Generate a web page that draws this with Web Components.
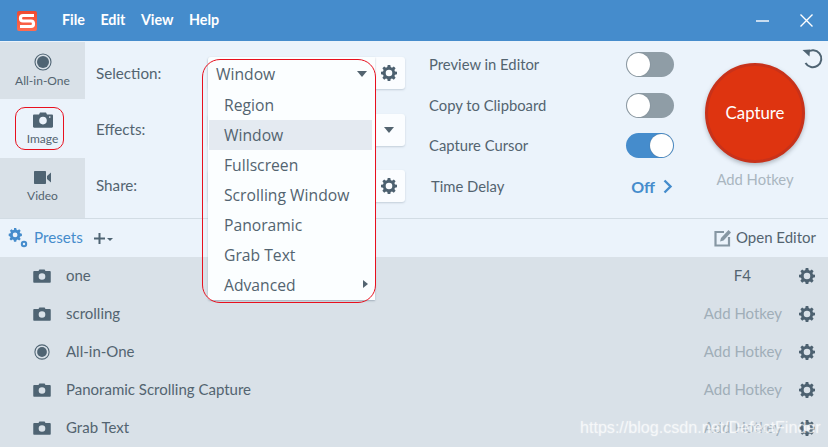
<!DOCTYPE html>
<html>
<head>
<meta charset="utf-8">
<style>
  html, body { margin: 0; padding: 0; }
  body { width: 828px; height: 447px; overflow: hidden; font-family: "Lato", "Liberation Sans", sans-serif; color: #536470; }
</style>
</head>
<body>
<snag-app></snag-app>

<script>
const GEAR = `<svg viewBox="0 0 16 16" width="16" height="16" style="display:block"><path fill="#4d6170" fill-rule="evenodd" d="M6.700 0h2.600l.4 2.100 1.300.6 1.800-1.200 1.800 1.800-1.200 1.800.6 1.300 2 .4v2.500l-2 .5-.6 1.300 1.200 1.700-1.800 1.900-1.800-1.200-1.300.5-.4 2H6.700l-.4-2-1.300-.5-1.800 1.200-1.800-1.900 1.200-1.700-.6-1.300-2-.5V6.800l2-.4.6-1.300-1.200-1.800 1.800-1.800 1.800 1.200 1.300-.6zM8 4.700a3.300 3.300 0 1 0 0 6.600 3.300 3.300 0 0 0 0-6.600z"/></svg>`;
const CAMERA = `<svg viewBox="0 0 20 16" width="20" height="16"><path fill="#4f6473" fill-rule="evenodd" d="M1.200 2.400H6L7 .5h6l1 1.900h4.800c.7 0 1.200.5 1.200 1.200v11c0 .7-.5 1.200-1.200 1.200H1.200C.5 15.800 0 15.300 0 14.600v-11c0-.7.5-1.200 1.200-1.200zM10 4.800a3.800 3.800 0 1 0 0 7.600 3.800 3.800 0 0 0 0-7.600zM16.800 4.300a.8.8 0 1 0 0 1.600.8.8 0 0 0 0-1.600z"/></svg>`;
const RADIO = `<svg viewBox="0 0 18 18" width="18" height="18"><circle cx="9" cy="9" r="8" fill="none" stroke="#4f6473" stroke-width="1.100"/><circle cx="9" cy="9" r="6" fill="#4f6473"/></svg>`;

class SnagTitlebar extends HTMLElement {
  constructor() {
    super();
    this.attachShadow({mode: "open"}).innerHTML = `
      <style>
        :host { display: flex; align-items: center; height: 41px; background: #458ccc; color: #fff; font-size: 14.300px; font-weight: 700; }
        .logo { margin-left: 17px; width: 20px; height: 20px; }
        nav { display: flex; gap: 15.500px; margin-left: 25px; padding-bottom: 2px; }
        .ctl { margin-left: auto; display: flex; gap: 31px; margin-right: 15px; align-items: center; }
      </style>
      <svg class="logo" viewBox="0 0 20 20">
        <defs><linearGradient id="lg" x1="0" y1="0" x2="0" y2="1"><stop offset="0" stop-color="#ee4a30"/><stop offset="1" stop-color="#ff6b50"/></linearGradient></defs>
        <rect width="20" height="20" rx="2" fill="url(#lg)"/>
        <path d="M17 4.500H6C4 4.500 3.500 6 3.500 7.200S4 10 6 10h8c2 0 2.500 1.300 2.500 2.700S16 15.500 14 15.500H3" fill="none" stroke="#fff" stroke-width="3.200"/>
      </svg>
      <nav><span>File</span><span>Edit</span><span>View</span><span>Help</span></nav>
      <div class="ctl">
        <svg width="13" height="13" viewBox="0 0 13 13"><path d="M0 7h13" stroke="#fff" stroke-width="1.400"/></svg>
        <svg width="13" height="13" viewBox="0 0 13 13"><path d="M.5.500l12 12M12.500.500l-12 12" stroke="#fff" stroke-width="1.400"/></svg>
      </div>`;
  }
}

class ModeTab extends HTMLElement {
  constructor() {
    super();
    this.attachShadow({mode: "open"}).innerHTML = `
      <style>
        :host { display: flex; flex-direction: column; align-items: center; justify-content: center; gap: var(--gap, 1px); flex: 1; background: #d9e1e8; font-size: 12px; color: #536470; padding: var(--pt, 0px) 0 var(--pb, 0px); }
        :host([active]) { background: transparent; }
        .ic { height: 18px; display: flex; align-items: center; }
      </style>
      <div class="ic"><slot name="icon"></slot></div>
      <slot></slot>`;
  }
}

class ModeSidebar extends HTMLElement {
  constructor() {
    super();
    this.attachShadow({mode: "open"}).innerHTML = `
      <style>:host { display: flex; flex-direction: column; width: 85px; padding-top: 1px; flex: none; }</style>
      <slot></slot>`;
  }
}

class SelectRow extends HTMLElement {
  constructor() {
    super();
    this.attachShadow({mode: "open"}).innerHTML = `
      <style>
        :host { display: flex; align-items: center; height: 32px; font-size: 15.200px; color: #536470; }
        .label { width: 123px; padding: 0 0 var(--lift, 0px) 11px; box-sizing: border-box; }
        .box { width: 197px; height: 32px; background: #fbfdff; border-radius: 3px; box-shadow: 0 1px 2px rgba(80,100,120,.25); display: flex; align-items: center; justify-content: flex-end; padding-right: 8px; box-sizing: border-box; }
      </style>
      <span class="label"><slot></slot></span>
      <div class="box"><slot name="end"></slot></div>`;
  }
}

class SnagDropdown extends HTMLElement {
  constructor() {
    super();
    this.attachShadow({mode: "open"}).innerHTML = `
      <style>
        :host { position: absolute; left: 208px; top: 57px; width: 167px; background: #fbfeff; box-shadow: 0 1px 2px rgba(80,100,120,.4); font-family: "Open Sans", "Noto Sans", sans-serif; font-size: 15.700px; color: #536470; border-radius: 3px 0 0 3px; }
        .head { display: flex; align-items: center; justify-content: space-between; height: 33px; padding: 0 8px 0 8px; }
        .arrow { width: 0; height: 0; border: 5px solid transparent; border-top: 6px solid #536470; border-bottom: 0; }
        .list { padding: 0 1px; }
      </style>
      <div class="head"><span>Window</span><span class="arrow"></span></div>
      <div class="list"><slot></slot></div>`;
  }
}

class DropItem extends HTMLElement {
  constructor() {
    super();
    this.attachShadow({mode: "open"}).innerHTML = `
      <style>
        :host { display: flex; align-items: center; height: 30px; padding-left: 15px; position: relative; }
        :host([selected]) { background: #e4eaf1; margin-right: 2px; }
        :host([more])::after { content: ""; position: absolute; right: 6px; top: 10px; border: 4.500px solid transparent; border-left: 5px solid #536470; border-right: 0; }
      </style>
      <slot></slot>`;
  }
}

class SettingRow extends HTMLElement {
  constructor() {
    super();
    this.attachShadow({mode: "open"}).innerHTML = `
      <style>
        :host { display: flex; align-items: center; justify-content: space-between; height: 25px; font-size: 14.800px; color: #536470; }
        span { padding-bottom: 1px; }
      </style>
      <span><slot></slot></span><slot name="end"></slot>`;
  }
}

class SnagToggle extends HTMLElement {
  constructor() {
    super();
    this.attachShadow({mode: "open"}).innerHTML = `
      <style>
        :host { display: flex; width: 48px; height: 25px; border-radius: 13px; background: #8f9da6; box-sizing: border-box; padding: 1px; }
        :host([on]) { background: #458ccc; justify-content: flex-end; }
        i { display: block; width: 23px; height: 23px; border-radius: 50%; background: #fff; box-shadow: 0 0 1px #5a6a75; }
      </style>
      <i></i>`;
  }
}

class CaptureButton extends HTMLElement {
  constructor() {
    super();
    this.attachShadow({mode: "open"}).innerHTML = `
      <style>
        :host { display: flex; flex-direction: column; align-items: center; width: 100px; }
        button { width: 100px; height: 100px; border-radius: 50%; border: 3px solid #c8321a; background: #de3410; color: #fff; font: 400 16.800px "Lato", sans-serif; box-shadow: 0 2px 4px rgba(60,70,80,.35); padding: 0 0 1px; }
        span { margin-top: 7px; font-size: 14.800px; color: #a9b6c0; white-space: nowrap; }
      </style>
      <button>Capture</button><span>Add Hotkey</span>`;
  }
}

class PresetRow extends HTMLElement {
  constructor() {
    super();
    this.attachShadow({mode: "open"}).innerHTML = `
      <style>
        :host { display: flex; align-items: center; height: 38px; font-size: 15px; color: #536470; }
        .ic { width: 66px; padding-left: 33px; box-sizing: border-box; display: flex; align-items: center; flex: none; }
        .name { flex: 1; padding-bottom: 2px; }
        .key { color: #a0aeb8; padding-bottom: 2px; }
        :host([assigned]) .key { color: #536470; margin-right: 31px; }
        .gear { margin: 0 13px 0 17px; display: flex; }
      </style>
      <div class="ic"><slot name="icon"></slot></div>
      <div class="name"><slot></slot></div>
      <span class="key"><slot name="key">Add Hotkey</slot></span>
      <div class="gear">${GEAR}</div>`;
  }
}

class SnagApp extends HTMLElement {
  constructor() {
    super();
    const cam = `<svg slot="icon" viewBox="0 0 20 16" width="18" height="14"><path fill="#4f6473" fill-rule="evenodd" d="M1.200 2.400H6L7 .5h6l1 1.900h4.800c.7 0 1.200.5 1.200 1.200v11c0 .7-.5 1.200-1.200 1.200H1.200C.5 15.800 0 15.300 0 14.600v-11c0-.7.5-1.200 1.200-1.200zM10 4.800a3.800 3.800 0 1 0 0 7.600 3.800 3.800 0 0 0 0-7.600z"/></svg>`;
    const rad = `<svg slot="icon" viewBox="0 0 18 18" width="16" height="16" style="margin-left:1px"><circle cx="9" cy="9" r="8" fill="none" stroke="#4f6473" stroke-width="1.200"/><circle cx="9" cy="9" r="5.500" fill="#4f6473"/></svg>`;
    this.attachShadow({mode: "open"}).innerHTML = `
      <style>
        :host { display: block; position: relative; width: 828px; height: 447px; overflow: hidden; background: #d9e1e8; }
        .top { display: flex; height: 177px; background: #ebf3fb; border-bottom: 1px solid #d2dce4; }
        .form { width: 320px; flex: none; display: flex; flex-direction: column; gap: 24px; padding-top: 16px; }
        .form :nth-child(2) { margin-top: 1px; }
        .settings { width: 245px; flex: none; margin-left: 24px; display: flex; flex-direction: column; gap: 15.500px; padding-top: 11px; box-sizing: border-box; }
        .cap { margin-left: 31px; padding-top: 22px; position: relative; }
        .reset { position: absolute; left: 96px; top: 7px; }
        .delay-off { color: #458ccc; font-weight: 700; font-size: 16px; display: flex; align-items: center; gap: 8px; margin-right: 1px; margin-left: -2px; }
        .plain { padding-left: 2px; }
        .bar { display: flex; align-items: center; height: 38px; background: #ebf3fb; font-size: 14px; padding: 0 12px 0 8px; }
        .presets { color: #458ccc; margin-left: 6px; font-size: 15.200px; padding-bottom: 2px; }
        .plus { margin-left: 11px; display: flex; align-items: center; gap: 2px; }
        .edit { margin-left: auto; display: flex; align-items: center; gap: 4px; font-size: 15px; color: #536470; }
        .edit b { font-weight: 400; padding-bottom: 2px; }
        .mark { position: absolute; font-family: "Liberation Sans", sans-serif; color: rgba(255,255,255,.68); font-size: 16.100px; left: 580px; top: 418px; text-shadow: 0 0 2px rgba(255,255,255,.45); white-space: nowrap; }
        .ring { position: absolute; border: 1px solid #e8101e; box-sizing: border-box; pointer-events: none; }
        .ring.a { left: 15px; top: 107px; width: 49px; height: 43px; border-radius: 10px; }
        .ring.b { left: 202px; top: 59px; width: 174px; height: 244px; border-radius: 18px; }
      </style>
      <snag-titlebar></snag-titlebar>
      <div class="top">
        <mode-sidebar>
          <mode-tab style="--pt:1px"><span slot="icon">${RADIO}</span>All-in-One</mode-tab>
          <mode-tab active style="--gap:0px;--pt:2px"><span slot="icon">${CAMERA}</span>Image</mode-tab>
          <mode-tab style="--gap:2px;--pb:4px"><svg slot="icon" viewBox="0 0 18 13" width="18" height="13"><path fill="#4f6473" d="M1 0h10c.6 0 1 .4 1 1v11c0 .6-.4 1-1 1H1c-.6 0-1-.4-1-1V1c0-.6.4-1 1-1zM13 5l4-3.500v10L13 8z"/></svg>Video</mode-tab>
        </mode-sidebar>
        <div class="form">
          <select-row>Selection:<span slot="end">${GEAR}</span></select-row>
          <select-row style="--lift:2px">Effects:<span slot="end" style="width:0;height:0;border:5px solid transparent;border-top:6px solid #536470;border-bottom:0;margin-right:3px"></span></select-row>
          <select-row style="--lift:2px">Share:<span slot="end">${GEAR}</span></select-row>
        </div>
        <div class="settings">
          <setting-row>Preview in Editor<snag-toggle slot="end"></snag-toggle></setting-row>
          <setting-row>Copy to Clipboard<snag-toggle slot="end"></snag-toggle></setting-row>
          <setting-row>Capture Cursor<snag-toggle slot="end" on></snag-toggle></setting-row>
          <setting-row><span class="plain">Time Delay</span><span class="delay-off" slot="end">Off <svg width="10" height="15" viewBox="0 0 10 15"><path d="M1.500 1.500L7.500 7.500l-6 6" fill="none" stroke="#458ccc" stroke-width="2.400"/></svg></span></setting-row>
        </div>
        <div class="cap">
          <capture-button></capture-button>
          <svg class="reset" width="22" height="22" viewBox="0 0 22 22"><path d="M6 4.500A8.500 8.500 0 1 1 4.500 15" fill="none" stroke="#4f6473" stroke-width="2"/><path d="M1.500 2l7.500-.5-.5 7z" fill="#4f6473"/></svg>
        </div>
      </div>
      <div class="bar">
        <svg width="20" height="20" viewBox="0 0 20 20"><g fill="#458ccc"><path fill-rule="evenodd" d="M6 0h2.200l.4 1.700 1.100.5 1.500-1 1.500 1.500-1 1.500.5 1.100 1.700.4V8l-1.700.4-.5 1.100 1 1.500-1.500 1.500-1.500-1-1.100.5-.4 1.700H6l-.4-1.700-1.100-.5-1.500 1-1.500-1.500 1-1.500-.5-1.100L.7 8V5.700l1.700-.4.5-1.100-1-1.500L3.400 1.200l1.500 1 1.100-.5zM7.100 4.500a2.400 2.400 0 1 0 0 4.800 2.400 2.400 0 0 0 0-4.800z"/><circle cx="16" cy="16" r="3.200"/></g><circle cx="16" cy="16" r="1.200" fill="#ebf3fb"/></svg>
        <span class="presets">Presets</span>
        <span class="plus"><svg width="11" height="11" viewBox="0 0 11 11"><path d="M5.500 0v11M0 5.500h11" stroke="#4f6473" stroke-width="2"/></svg><svg width="6" height="3" viewBox="0 0 6 3" style="margin-top:3px"><path d="M0 0h6L3 3z" fill="#4f6473"/></svg></span>
        <span class="edit"><svg width="18" height="18" viewBox="0 0 18 18"><path d="M10 3H1.500v13.500H15V8" fill="none" stroke="#8697a3" stroke-width="2.200"/><path d="M6 12.500l1-3.500 7.500-8 2.500 2.500-7.500 8z" fill="#8697a3"/></svg><b>Open Editor</b></span>
      </div>
      <preset-row assigned>${cam}one<span slot="key">F4</span></preset-row>
      <preset-row>${cam}scrolling</preset-row>
      <preset-row>${rad}All-in-One</preset-row>
      <preset-row>${cam}Panoramic Scrolling Capture</preset-row>
      <preset-row>${cam}Grab Text</preset-row>
      <snag-dropdown>
        <drop-item>Region</drop-item>
        <drop-item selected>Window</drop-item>
        <drop-item>Fullscreen</drop-item>
        <drop-item>Scrolling Window</drop-item>
        <drop-item>Panoramic</drop-item>
        <drop-item>Grab Text</drop-item>
        <drop-item more>Advanced</drop-item>
      </snag-dropdown>
      <div class="ring a"></div>
      <div class="ring b"></div>
      <div class="mark">https://blog.csdn.net/DefectFinder</div>`;
  }
}

customElements.define("snag-titlebar", SnagTitlebar);
customElements.define("mode-tab", ModeTab);
customElements.define("mode-sidebar", ModeSidebar);
customElements.define("select-row", SelectRow);
customElements.define("snag-dropdown", SnagDropdown);
customElements.define("drop-item", DropItem);
customElements.define("setting-row", SettingRow);
customElements.define("snag-toggle", SnagToggle);
customElements.define("capture-button", CaptureButton);
customElements.define("preset-row", PresetRow);
customElements.define("snag-app", SnagApp);
</script>
</body>
</html>
